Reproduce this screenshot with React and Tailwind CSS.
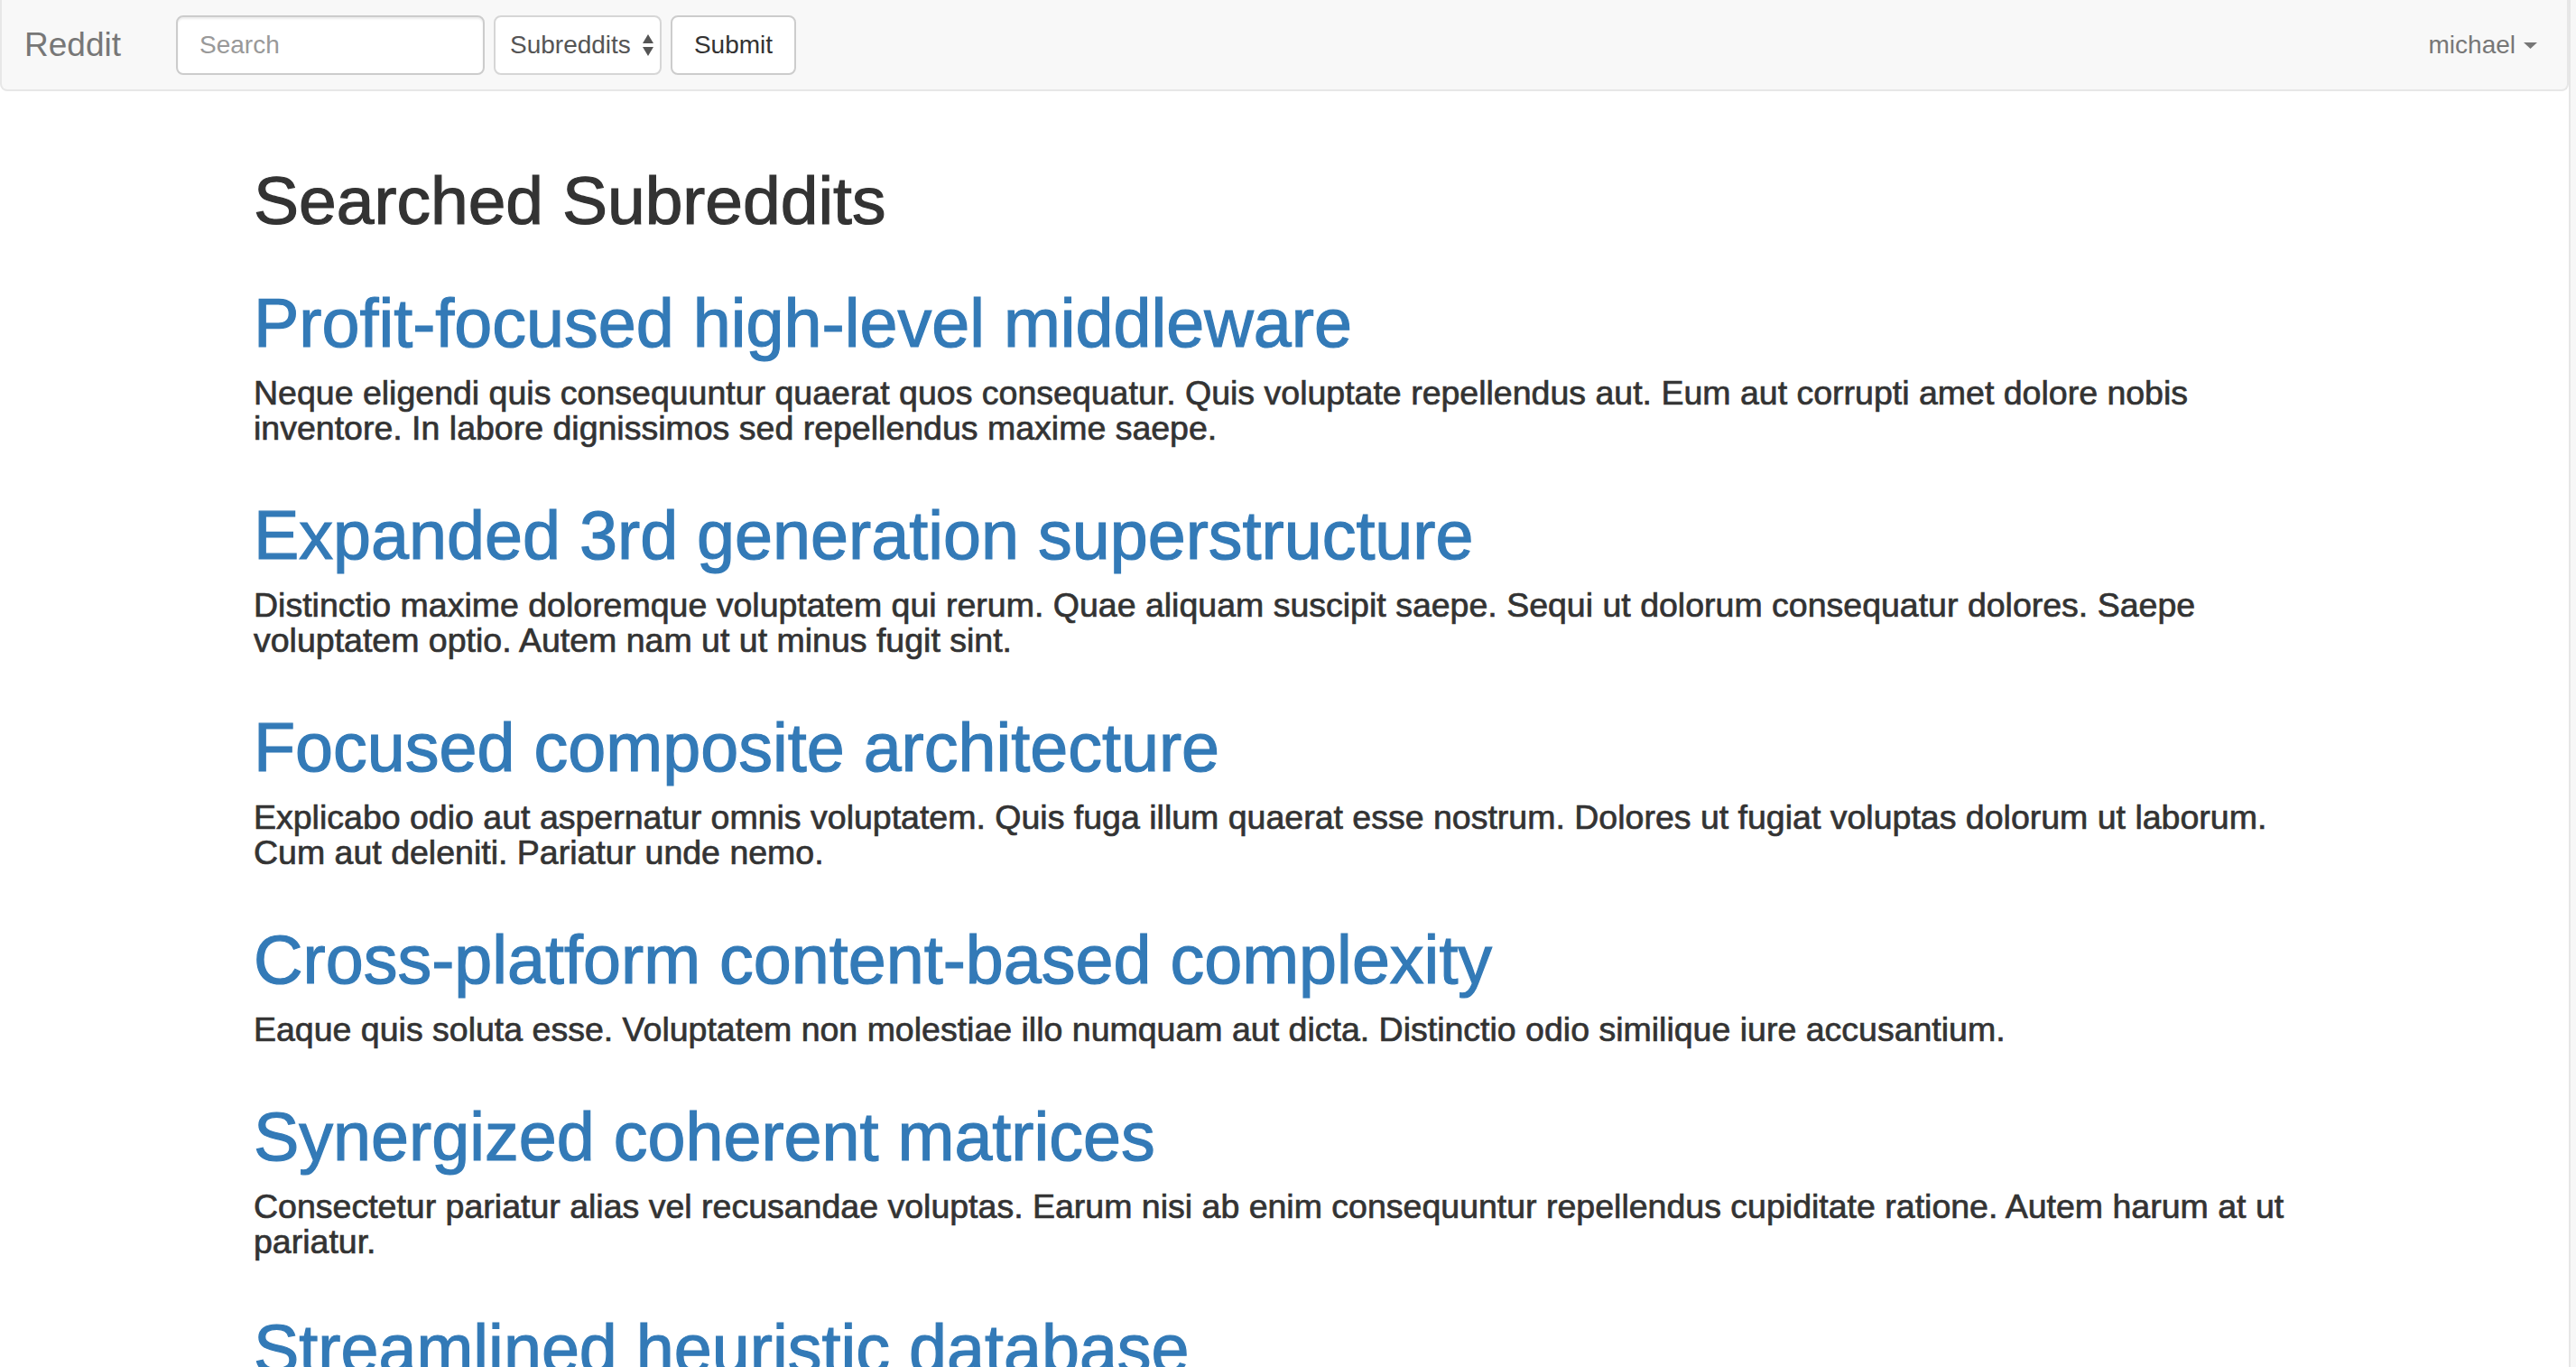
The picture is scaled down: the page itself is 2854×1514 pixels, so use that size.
import React from "react";

const items = [
  [
    "Profit-focused high-level middleware",
    "Neque eligendi quis consequuntur quaerat quos consequatur. Quis voluptate repellendus aut. Eum aut corrupti amet dolore nobis inventore. In labore dignissimos sed repellendus maxime saepe.",
  ],
  [
    "Expanded 3rd generation superstructure",
    "Distinctio maxime doloremque voluptatem qui rerum. Quae aliquam suscipit saepe. Sequi ut dolorum consequatur dolores. Saepe voluptatem optio. Autem nam ut ut minus fugit sint.",
  ],
  [
    "Focused composite architecture",
    "Explicabo odio aut aspernatur omnis voluptatem. Quis fuga illum quaerat esse nostrum. Dolores ut fugiat voluptas dolorum ut laborum. Cum aut deleniti. Pariatur unde nemo.",
  ],
  [
    "Cross-platform content-based complexity",
    "Eaque quis soluta esse. Voluptatem non molestiae illo numquam aut dicta. Distinctio odio similique iure accusantium.",
  ],
  [
    "Synergized coherent matrices",
    "Consectetur pariatur alias vel recusandae voluptas. Earum nisi ab enim consequuntur repellendus cupiditate ratione. Autem harum at ut pariatur.",
  ],
  [
    "Streamlined heuristic database",
    "Aut quia quo ut voluptas. Eos sunt dolorem fugit nesciunt. Rerum minima et quas voluptatem eius.",
  ],
];

function SelectArrows() {
  return (
    <svg width="12" height="24" viewBox="0 0 12 24" className="ml-[13px]">
      <path d="M6 0 L12 10 L0 10 Z" fill="#555" />
      <path d="M0 14 L12 14 L6 24 Z" fill="#555" />
    </svg>
  );
}

export default function App() {
  return (
    <div className="flex h-[1514px] w-full overflow-hidden bg-white font-['Liberation_Sans',Arial,sans-serif]">
      <div className="flex w-[2846px] shrink-0 flex-col">
        <nav className="flex h-[101px] shrink-0 items-center rounded-b-[8px] border-x-2 border-b-2 border-[#e7e7e7] bg-[#f8f8f8]">
          <div className="ml-[25px] w-[168px] text-[37px] leading-none text-[#777]">Reddit</div>
          <input
            placeholder="Search"
            className="h-[66px] w-[342px] rounded-[8px] border-2 border-[#cccccc] bg-white px-[24px] text-[28px] text-[#555] shadow-[inset_0_2px_2px_rgba(0,0,0,0.075)] outline-none placeholder:text-[#999]"
          />
          <div className="ml-[10px] flex h-[66px] w-[186px] items-center rounded-[8px] border-2 border-[#d6d6d6] bg-white pl-[16px] text-[28px] text-[#555]">
            <span>Subreddits</span>
            <SelectArrows />
          </div>
          <button className="ml-[10px] h-[66px] w-[139px] rounded-[8px] border-2 border-[#cccccc] bg-white text-[28px] text-[#333]">
            Submit
          </button>
          <div className="ml-auto mr-[33px] flex items-center text-[28px] leading-none text-[#777]">
            <span>michael</span>
            <svg width="15" height="7" viewBox="0 0 15 7" className="ml-[9px] mt-[2px]">
              <path d="M0 0 L15 0 L7.5 7 Z" fill="#777" />
            </svg>
          </div>
        </nav>
        <main className="ml-[281px] w-[2282px] pt-[82px]">
          <h1 className="mb-[57px] text-[75px] leading-[79px] text-[#333] [-webkit-text-stroke:1.2px_#333]">
            Searched Subreddits
          </h1>
          <div className="flex flex-col gap-[60px]">
            {items.map(([title, body]) => (
              <div key={title}>
                <h1 className="mb-[18px] text-[75.5px] leading-[79px] text-[#337ab7] [-webkit-text-stroke:1.2px_#337ab7]">
                  {title}
                </h1>
                <h4 className="text-[37.5px] leading-[39px] text-[#333] [-webkit-text-stroke:0.7px_#333]">
                  {body}
                </h4>
              </div>
            ))}
          </div>
        </main>
      </div>
      <div className="h-full w-[8px] shrink-0 border-l-2 border-[#e6e6e6] bg-[#f7f7f7]" />
    </div>
  );
}
